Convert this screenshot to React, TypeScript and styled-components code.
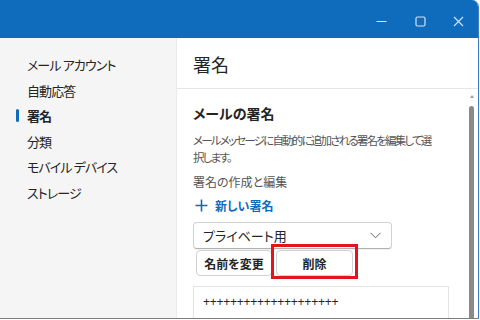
import React from "react";
import styled, { createGlobalStyle } from "styled-components";

const Global = createGlobalStyle`
  html, body { margin: 0; padding: 0; background: #ffffff; }
  body { font-family: "Noto Sans CJK JP", "Noto Sans", sans-serif; font-feature-settings: "palt"; }
  #root { width: 480px; height: 320px; overflow: hidden; }
  * { box-sizing: border-box; }
`;

const Window = styled.div`
  width: 479px;
  height: 319px;
  display: flex;
  flex-direction: column;
  border-right: 1px solid #3c7cc4;
  border-bottom: 1px solid #7d7d7d;
  border-top-right-radius: 7px;
  overflow: hidden;
  background: #ffffff;
`;

const TitleBar = styled.div`
  height: 38px;
  flex: none;
  background: #0f6cbd;
  display: flex;
  justify-content: flex-end;
  align-items: stretch;
`;

const CaptionButton = styled.div`
  width: 38.5px;
  display: flex;
  align-items: center;
  justify-content: center;
  padding-top: 4px;
  color: #d4e3f4;
`;

const Body = styled.div`
  flex: 1;
  display: flex;
  min-height: 0;
`;

const Sidebar = styled.nav`
  width: 177px;
  flex: none;
  background: #f5f5f5;
  border-right: 1px solid #ebebeb;
  padding-top: 14px;
  display: flex;
  flex-direction: column;
`;

const NavItem = styled.div<{ $active?: boolean }>`
  position: relative;
  height: 25.6px;
  line-height: 25.6px;
  padding-left: 27px;
  font-size: 13px;
  letter-spacing: -0.9px;
  color: #242424;
  font-weight: ${(p) => (p.$active ? 700 : 400)};
  white-space: nowrap;
  &::before {
    content: "";
    display: ${(p) => (p.$active ? "block" : "none")};
    position: absolute;
    left: 16px;
    top: 6px;
    width: 3px;
    height: 13px;
    border-radius: 2px;
    background: #0f6cbd;
  }
`;

const Main = styled.main`
  flex: 1;
  display: flex;
  flex-direction: column;
  min-width: 0;
`;

const Header = styled.header`
  height: 51px;
  flex: none;
  border-bottom: 1px solid #e6e6e6;
  padding-left: 16px;
  padding-top: 1px;
  display: flex;
  align-items: center;
  font-size: 18px;
  color: #242424;
`;

const ContentRow = styled.div`
  flex: 1;
  display: flex;
  min-height: 0;
`;

const Scroll = styled.div`
  flex: 1;
  padding-left: 16px;
  padding-top: 14px;
  display: flex;
  flex-direction: column;
  align-items: flex-start;
  overflow: hidden;
  & > * {
    flex-shrink: 0;
  }
`;

const SectionTitle = styled.h2`
  margin: 0;
  font-size: 14px;
  line-height: 20px;
  font-weight: 700;
  color: #242424;
`;

const Desc = styled.p<{ $mt: number }>`
  margin: ${(p) => p.$mt}px 0 0 0;
  font-size: 11.5px;
  line-height: 17px;
  color: #555555;
  white-space: nowrap;
  letter-spacing: -1.8px;
`;

const Label = styled.p`
  margin: 7px 0 0 0;
  font-size: 12px;
  line-height: 17px;
  color: #555555;
  white-space: nowrap;
`;

const LinkButton = styled.div`
  margin-top: 5px;
  height: 20px;
  display: flex;
  align-items: center;
  gap: 7px;
  padding-left: 2px;
  color: #0f6cbd;
  font-size: 12px;
  font-weight: 700;
`;

const Select = styled.div`
  margin-top: 7px;
  width: 199px;
  height: 27px;
  border: 1px solid #d1d1d1;
  border-bottom-color: #b0b0b0;
  border-radius: 4px;
  display: flex;
  align-items: center;
  justify-content: space-between;
  padding: 0 10px 0 9px;
  font-size: 13px;
  line-height: 17px;
  color: #242424;
  background: #fff;
  box-shadow: 0 1px 1px rgba(0, 0, 0, 0.06);
`;

const ButtonRow = styled.div`
  margin-top: 1px;
  margin-left: 3px;
  display: flex;
  gap: 4px;
`;

const Btn = styled.div<{ $w: number }>`
  position: relative;
  width: ${(p) => p.$w}px;
  height: 26px;
  border: 1px solid #d1d1d1;
  border-radius: 4px;
  background: #fff;
  display: flex;
  align-items: center;
  justify-content: center;
  font-size: 12px;
  line-height: 17px;
  font-weight: 700;
  color: #242424;
`;

const Highlight = styled.div`
  position: absolute;
  left: -6px;
  right: -6px;
  top: -7px;
  bottom: -4px;
  border: 3px solid #e3141d;
  pointer-events: none;
`;

const Editor = styled.div`
  margin-top: 10px;
  width: 256px;
  height: 60px;
  border: 1px solid #e3e3e3;
  padding: 7px 0 0 9px;
  font-family: "Liberation Sans", Arial, sans-serif;
  font-size: 12px;
  line-height: 16px;
  color: #242424;
  letter-spacing: -0.25px;
`;

const ScrollTrack = styled.div`
  width: 12px;
  flex: none;
  display: flex;
  flex-direction: column;
  align-items: flex-start;
  padding-left: 3px;
  padding-top: 6px;
`;

const Arrow = styled.div`
  margin-left: 0.5px;
  width: 0;
  height: 0;
  border-left: 2px solid transparent;
  border-right: 2px solid transparent;
  border-bottom: 3px solid #9a9a9a;
`;

const Thumb = styled.div`
  margin-top: 8px;
  width: 5px;
  flex: 1;
  background: #8a8a8a;
  border-radius: 3px 3px 0 0;
`;

export default function App() {
  return (
    <>
      <Global />
      <Window>
        <TitleBar>
          <CaptionButton>
            <svg width="11" height="11" viewBox="0 0 11 11">
              <line x1="0.5" y1="5.5" x2="10.5" y2="5.5" stroke="currentColor" strokeWidth="1" />
            </svg>
          </CaptionButton>
          <CaptionButton>
            <svg width="11" height="11" viewBox="0 0 11 11">
              <rect x="1" y="1" width="9" height="9" rx="1.5" fill="none" stroke="currentColor" strokeWidth="1.2" />
            </svg>
          </CaptionButton>
          <CaptionButton>
            <svg width="11" height="11" viewBox="0 0 11 11">
              <path d="M1 1 L10 10 M10 1 L1 10" stroke="currentColor" strokeWidth="1.1" />
            </svg>
          </CaptionButton>
        </TitleBar>
        <Body>
          <Sidebar>
            <NavItem>メール アカウント</NavItem>
            <NavItem>自動応答</NavItem>
            <NavItem $active>署名</NavItem>
            <NavItem>分類</NavItem>
            <NavItem>モバイル デバイス</NavItem>
            <NavItem>ストレージ</NavItem>
          </Sidebar>
          <Main>
            <Header>署名</Header>
            <ContentRow>
              <Scroll>
                <SectionTitle>メールの署名</SectionTitle>
                <Desc $mt={9}>
                  メールメッセージに自動的に追加される署名を編集して選
                  <br />
                  択します。
                </Desc>
                <Label>署名の作成と編集</Label>
                <LinkButton>
                  <svg width="13" height="13" viewBox="0 0 13 13">
                    <path d="M6.5 0.5 V12.5 M0.5 6.5 H12.5" stroke="#0f6cbd" strokeWidth="1.6" />
                  </svg>
                  新しい署名
                </LinkButton>
                <Select>
                  <span>プライベート用</span>
                  <svg width="11" height="7" viewBox="0 0 11 7">
                    <path d="M0.5 0.8 L5.5 5.8 L10.5 0.8" fill="none" stroke="#616161" strokeWidth="1" />
                  </svg>
                </Select>
                <ButtonRow>
                  <Btn $w={76}>名前を変更</Btn>
                  <Btn $w={77}>
                    削除
                    <Highlight />
                  </Btn>
                </ButtonRow>
                <Editor>++++++++++++++++++++</Editor>
              </Scroll>
              <ScrollTrack>
                <Arrow />
                <Thumb />
              </ScrollTrack>
            </ContentRow>
          </Main>
        </Body>
      </Window>
    </>
  );
}
